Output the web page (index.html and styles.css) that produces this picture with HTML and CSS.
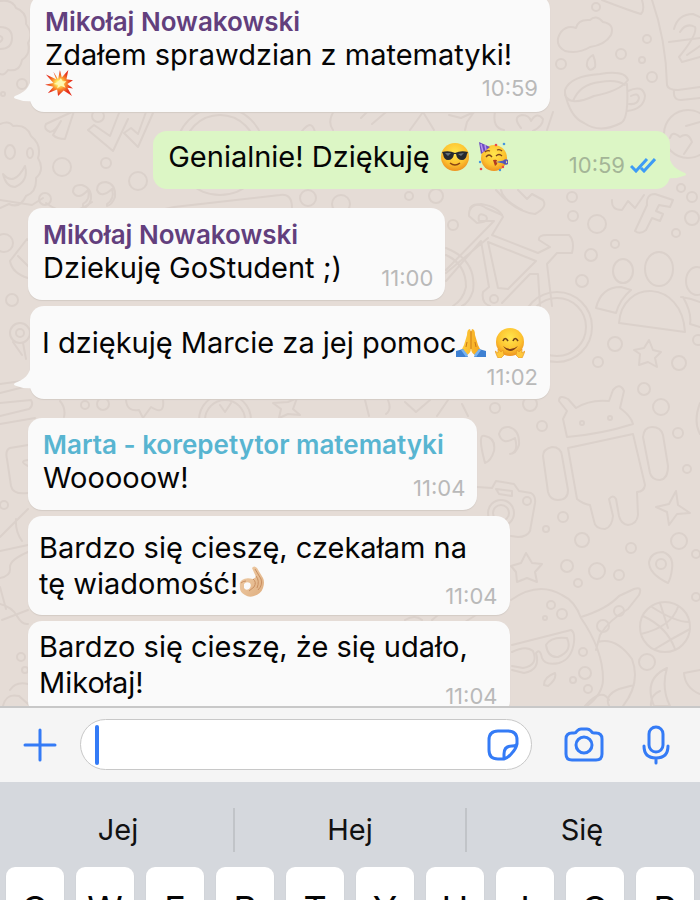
FILE: index.html
```html
<!DOCTYPE html>
<html lang="pl">
<head>
<meta charset="utf-8">
<meta name="viewport" content="width=device-width, initial-scale=1">
<title>Czat</title>
<link rel="stylesheet" href="styles.css">
</head>
<body>
<svg class="defs" aria-hidden="true">
  <defs>
    <radialGradient id="face" cx=".5" cy=".35" r=".65"><stop offset="0" stop-color="#ffe64d"/><stop offset=".65" stop-color="#fdc22f"/><stop offset="1" stop-color="#ee9220"/></radialGradient>
    <radialGradient id="boom" cx=".5" cy=".5" r=".55"><stop offset="0" stop-color="#fff"/><stop offset=".2" stop-color="#ffe65a"/><stop offset=".45" stop-color="#f98d2b"/><stop offset=".8" stop-color="#e62f1c"/></radialGradient>
    <linearGradient id="palm" x1="0" x2="1"><stop offset="0" stop-color="#ffcf3d"/><stop offset="1" stop-color="#f5a51e"/></linearGradient>
    <linearGradient id="skin" x1="0" x2="1" y2="1"><stop offset="0" stop-color="#f0cfaa"/><stop offset="1" stop-color="#dfae7f"/></linearGradient>
    <symbol id="tail" viewBox="0 0 20 26"><path d="M17 0C17 12 9 17 1 20Q-1 21.500 1 22.500Q9 26 20 25V0Z"/></symbol>
  </defs>
</svg>

<main class="chat">
  <svg class="wallpaper" viewBox="0 0 700 706" preserveAspectRatio="xMaxYMin slice" aria-hidden="true">
    <!-- cookies and small shapes on the left -->
    <path d="M0 1Q12-1 16 8Q27 12 26 24Q34 34 28 43Q31 54 22 60Q20 72 8 70Q4 76 0 74M0 27Q12 27 12 38T0 49M0 36Q5 38 0 42"/>
    <path d="M0 124Q9 120 13 126Q27 124 31 136Q42 145 38 158Q45 170 36 178Q37 192 26 196Q20 209 9 204L0 208"/>
    <ellipse cx="10" cy="152" rx="5" ry="7"/><ellipse cx="30" cy="153" rx="3" ry="5"/><path d="M3 174Q14 187 25 166Q29 181 15 187Q6 187 3 174"/>
    <path d="M46 124L74 111L65 139Q57 139 53 135L61 121Q55 132 50 132Q43 129 46 124M88 130L113 151L128 119M88 130L94 125L110 136L119 113M124 133L138 147L153 113M124 133L131 128L138 134L146 112"/>
    <circle cx="98" cy="116" r="6"/><circle cx="62" cy="167" r="9"/><circle cx="106" cy="163" r="5"/><circle cx="138" cy="181" r="9"/><circle cx="45" cy="199" r="6"/><circle cx="22" cy="84" r="5"/><circle cx="12" cy="300" r="6"/><circle cx="3" cy="94" r="2"/>
    <path d="M83 204Q91 199 88 190Q78 201 73 192Q73 184 82 185Q92 188 91 199Q89 207 83 208ZM107 204Q115 199 112 189Q101 199 97 190Q97 182 106 182Q116 184 115 197Q112 205 107 206Z"/>
    <circle cx="220" cy="151" r="44"/><circle cx="220" cy="151" r="36"/><path d="M156 211L174 207L280 195Q292 193 292 208M298 137Q311 116 315 132M334 111Q327 122 333 130"/>
    <circle cx="308" cy="198" r="8"/><circle cx="341" cy="204" r="9"/><circle cx="4" cy="243" r="9"/><path d="M10 261L27 239L40 247M10 261Q12 273 28 278M18 256L30 268"/>
    <circle cx="20" cy="333" r="10"/><circle cx="20" cy="333" r="4"/><path d="M23 343L26 359M13 342L22 355M0 384L29 380M0 393L28 386M0 403L31 400Q34 405 29 409L0 416M0 424L35 418M60 401Q66 408 64 417M0 200L32 205L43 198M46 203Q68 220 92 202"/>
    <circle cx="85" cy="405" r="4"/><circle cx="103" cy="404" r="6"/><circle cx="225" cy="420" r="26"/><circle cx="225" cy="420" r="20"/><path d="M126 400Q127 412 139 410L143 418L151 407Q165 416 163 400M273 403L288 402L297 398L293 409L300 415L288 414L279 418L281 409ZM220 405L225 412L231 403"/>
    <path d="M28 445L10 448Q5 450 7 459L11 486Q13 495 28 493M28 460Q18 461 28 466M0 537L28 509M0 551L28 545M16 519Q15 531 22 541M0 578Q11 576 10 568T28 552M0 604Q12 607 17 616T28 624M0 587L6 609M2 620L28 610"/>
    <circle cx="4" cy="505" r="4"/><circle cx="21" cy="657" r="4"/><circle cx="25" cy="670" r="3"/><path d="M3 706Q6 693 19 696L28 704M10 690Q16 681 28 684"/>
    <!-- cloud, cup and tablet -->
    <path d="M565 51Q553 44 561 32Q567 25 576 28Q578 19 590 20Q596 14 603 22Q615 24 611 35Q605 45 590 47Q579 54 565 51Z"/>
    <path d="M565 90Q570 76 600 74Q625 70 628 80Q620 91 594 96Q570 107 565 95ZM565 93Q570 117 584 123Q600 134 621 123Q629 119 627 84M573 101Q580 84 600 82Q617 79 625 85"/><path d="M628 91Q643 84 645 96Q644 109 627 111M631 96Q638 92 639 98Q638 105 629 104"/>
    <path d="M593 55Q596 62 595 67Q590 73 587 66Q586 59 593 55ZM602 0Q628 10 641 14Q645 10 642 0M652 0Q666 40 667 85Q668 90 678 90L700 87M669 42L700 38M674 91Q673 100 681 100L700 98"/>
    <path d="M674 29Q678 14 693 14L700 17M680 32Q686 22 695 27Q698 34 679 57L682 62L700 57M687 55L700 46"/>
    <circle cx="596" cy="7" r="4"/><circle cx="647" cy="39" r="4"/><circle cx="621" cy="54" r="5"/><circle cx="642" cy="60" r="3"/><circle cx="561" cy="64" r="5"/><circle cx="652" cy="77" r="5"/>
    <circle cx="688" cy="134" r="24"/><path d="M670 138Q672 130 680 137Q688 131 692 142L684 154M686 126L700 122M361 118L367 112M372 124L386 112M410 130L423 112L434 130M449 115L461 118L474 112L467 122L465 130M495 112Q492 128 504 130M521 128Q512 117 522 115Q529 115 531 121Q537 111 543 119Q543 126 533 131M547 130L553 112"/>
    <!-- telephone and keys above the bicycle -->
    <circle cx="409" cy="196" r="4"/><circle cx="436" cy="196" r="7"/><circle cx="572" cy="197" r="5"/><circle cx="681" cy="188" r="4"/><circle cx="692" cy="197" r="5"/>
    <path d="M470 208Q475 201 486 208L502 215M496 190Q515 212 535 214Q548 207 543 200L532 194L527 199L518 190M501 190Q503 200 522 210M612 200Q611 210 622 210L628 201L635 208L644 195M635 231L647 205Q646 194 655 194L673 200L670 207L659 205L656 211L663 214L660 221L652 218L646 230Q640 235 635 231Z"/>
    <!-- bicycle -->
    <circle cx="557" cy="327" r="35"/><circle cx="557" cy="327" r="29"/><path d="M446 248Q477 260 473 291Q469 303 462 306M446 255Q466 264 466 287Q463 300 453 306"/>
    <path d="M477 223L469 216Q468 205 481 204Q499 207 503 217L492 235L538 253L550 247L539 240Q538 235 547 235L569 235Q575 241 572 253L557 253L547 264L552 306M477 223Q490 222 486 216Q477 211 479 221L494 221L446 270M446 281L481 241L489 287L483 292Q481 303 490 306M488 242L536 261L508 289L498 288ZM502 303L530 274L538 274L540 306M488 238L446 273"/>
    <circle cx="494" cy="299" r="4"/><circle cx="453" cy="225" r="5"/><circle cx="573" cy="216" r="5"/><circle cx="597" cy="224" r="9"/><circle cx="615" cy="244" r="4"/><circle cx="591" cy="255" r="6"/><circle cx="582" cy="281" r="6"/><circle cx="676" cy="233" r="4"/><circle cx="692" cy="218" r="7"/>
    <!-- people -->
    <ellipse cx="623" cy="271" rx="10" ry="12"/><ellipse cx="659" cy="269" rx="14" ry="17"/><ellipse cx="697" cy="281" rx="11" ry="14"/>
    <path d="M619 323C622 279 682 279 685 332ZM596 308Q601 287 621 287L631 290Q620 299 616 313ZM681 297Q690 298 700 302M683 297Q692 313 690 324L700 327"/>
    <path d="M649 340L653 350L661 352L655 358L657 367L648 362L639 365L640 354L634 350L644 348Z"/>
    <circle cx="615" cy="344" r="7"/><circle cx="598" cy="362" r="5"/><circle cx="679" cy="363" r="7"/><circle cx="698" cy="340" r="5"/><circle cx="644" cy="389" r="6"/><circle cx="661" cy="407" r="8"/><circle cx="495" cy="408" r="5"/><circle cx="530" cy="404" r="7"/><circle cx="542" cy="426" r="5"/><circle cx="678" cy="433" r="5"/><circle cx="687" cy="469" r="4"/>
    <!-- robot -->
    <path d="M567 437L563 419L567 411L559 401Q559 394 568 399L576 408Q590 399 609 401L613 390Q620 382 624 391L620 408Q631 416 633 424Q602 434 567 437ZM568 448L633 434L645 485Q644 492 637 492L638 515Q637 524 628 525Q621 524 619 516L616 499Q613 494 609 499L613 516Q612 527 605 529Q595 529 594 521L590 505Q583 504 577 499ZM543 456Q543 449 552 447Q561 447 562 456L568 490Q568 500 558 500Q550 500 548 492ZM643 437Q644 427 652 427Q661 427 663 435L668 466Q668 479 660 480Q652 480 650 473Z"/>
    <circle cx="582" cy="423" r="2"/><circle cx="610" cy="418" r="2"/><path d="M676 491L678 505L690 513L677 514L669 525L667 512L656 507L669 504ZM700 403Q693 421 700 434"/>
    <circle cx="563" cy="517" r="5"/><circle cx="546" cy="529" r="3"/><circle cx="582" cy="540" r="7"/><circle cx="631" cy="548" r="5"/><circle cx="679" cy="541" r="8"/><circle cx="696" cy="554" r="4"/><circle cx="567" cy="566" r="6"/><circle cx="597" cy="571" r="8"/><circle cx="619" cy="575" r="5"/><circle cx="578" cy="583" r="4"/><circle cx="696" cy="597" r="4"/>
    <!-- camera, quotes, star, pin -->
    <path d="M483 455Q478 433 485 436Q496 438 494 451Q491 461 485 463ZM510 454Q519 452 515 438Q502 446 499 434Q501 426 509 427Q520 430 519 445Q516 454 510 454ZM477 487L492 488L496 481L514 484L519 491L531 493Q536 496 535 503L530 531Q527 537 518 537L511 536M496 489L512 491L512 496L499 494Z"/>
    <circle cx="501" cy="513" r="13"/><circle cx="501" cy="513" r="8"/><circle cx="527" cy="501" r="4"/>
    <path d="M526 553L532 563L542 564L535 572L537 582L527 578L517 582L516 572L511 566L521 563ZM668 583Q649 574 649 562Q651 552 663 552Q674 556 672 569Q671 578 668 583Z"/><circle cx="661" cy="564" r="5"/>
    <!-- ghost with glasses, ball, boomerang -->
    <path d="M511 600Q538 581 562 595Q575 601 581 618Q603 650 603 679Q603 694 587 706M512 645L571 630Q575 632 574 642Q572 659 559 663Q545 666 542 658Q540 648 536 653Q541 670 524 673L512 670M512 652Q526 645 533 651Q539 665 523 668L512 666M546 645Q551 636 567 638Q573 651 558 657Q548 658 546 645ZM581 617Q607 609 619 596L634 589Q643 586 639 595L628 609Q609 620 600 635L596 650M598 642Q616 637 632 659Q641 683 623 706M609 706Q604 695 619 689L634 685M544 685Q544 677 555 673Q557 679 548 686Z"/>
    <circle cx="551" cy="605" r="4"/><circle cx="562" cy="614" r="5"/><circle cx="545" cy="618" r="2"/><circle cx="603" cy="626" r="6"/><circle cx="619" cy="611" r="5"/><circle cx="583" cy="652" r="4"/><circle cx="585" cy="673" r="6"/><circle cx="573" cy="680" r="3"/><circle cx="588" cy="689" r="4"/><circle cx="647" cy="662" r="8"/>
    <circle cx="665" cy="627" r="25"/><path d="M643 616Q667 627 675 649M641 634Q671 627 678 607M652 607Q675 622 689 622M655 649Q671 639 690 629M660 603L668 628"/>
    <path d="M667 668Q643 679 654 706L670 706Q661 688 667 668M684 673L700 670M684 673Q685 688 700 694M585 706Q602 687 609 700M651 706Q650 695 660 691"/>
    <path d="M365 400L369 416M388 400Q392 410 386 414M405 402L416 412L430 400M437 416L448 400M462 404L468 416M390 600M405 620Q415 614 422 620M432 620L438 615M465 622L476 615"/>
  </svg>

  <ol class="messages">
    <li class="msg in w-wide first">
      <svg class="tail"><use href="#tail"/></svg>
      <div class="body flush"><h2 class="author mikolaj">Mikołaj Nowakowski</h2>
        <p>Zdałem sprawdzian z matematyki!<br><svg class="emoji boom" viewBox="0 0 30 30" role="img" aria-label="💥"><path fill="url(#boom)" d="M14 11L16 1L18 9L25 1L23 11L30 12L24 16L30 21L24 20L29 29L20 23L14 29L13 22L3 26L9 19L0 17L9 15L1 6L12 11L9 3Z"/><path fill="#fff7b0" d="M14 14L17 10L19 13L23 13L20 16L22 20L17 18L13 21L14 17L9 16Z"/></svg></p></div>
      <time>10:59</time>
    </li>
    <li class="msg out">
      <svg class="tail"><use href="#tail"/></svg>
      <div class="body"><p>Genialnie! Dziękuję<svg class="emoji spaced" viewBox="0 0 30 30" role="img" aria-label="😎"><circle cx="15" cy="15" r="14" fill="url(#face)"/><path d="M2 10Q9 8 15 11Q21 8 28 10L27 12Q26 18 22 18Q17 18 16 12H14Q13 18 8 18Q4 18 3 12Z" fill="#252a30"/><path d="M5 11L11 11L8 14ZM18 12L24 11L21 14Z" fill="#667078"/><path d="M10 21Q15 25 20 21" fill="none" stroke="#8a4513" stroke-width="1.500"/></svg>
        <svg class="emoji" viewBox="0 0 30 30" role="img" aria-label="🥳"><circle cx="16" cy="16" r="13" fill="url(#face)"/><path d="M1 0L12 5L3 12Z" fill="#6b4bc0"/><path d="M3 2L5 10M7 3L8 8" stroke="#b894ee" stroke-width="1.500"/><path d="M8 15Q11 11 14 15M18 14Q21 11 24 14M7 10Q9 8 12 9M19 8Q22 7 24 9" fill="none" stroke="#79411c" stroke-width="1.300"/><path d="M15 18Q21 17 18 20Q21 21 17 24" fill="#b13b20"/><path d="M18 20L28 18V22Z" fill="#5060bd"/><circle cx="28" cy="20" r="2" fill="none" stroke="#5752b5" stroke-width="1.500"/><g fill="#eb4a4a"><circle cx="18" cy="3" r="1.300"/><circle cx="3" cy="27" r="1.300"/><circle cx="25" cy="25" r="1.200"/></g><g fill="#4597df"><circle cx="26" cy="2" r="1.300"/><circle cx="2" cy="20" r="1.200"/><circle cx="22" cy="28" r="1.200"/></g></svg></p></div>
      <time>10:59<svg class="ticks" viewBox="0 0 26 16" role="img" aria-label="Przeczytano"><path d="M1 9L6 14L17 2M11 11L14 14L25 2" /></svg></time>
    </li>
    <li class="msg in w-small gap-m">
      <div class="body"><h2 class="author mikolaj">Mikołaj Nowakowski</h2><p>Dziekuję GoStudent ;)</p></div>
      <time>11:00</time>
    </li>
    <li class="msg in w-wide gap-s">
      <svg class="tail"><use href="#tail"/></svg>
      <div class="body roomy"><p>I dziękuję Marcie za jej pomoc<svg class="emoji" viewBox="0 0 30 30" role="img" aria-label="🙏"><path d="M14 1Q11 1 11 7L8 17L5 23L9 28Q15 26 15 20Q15 26 21 28L25 23L22 17L19 7Q19 1 16 1L15 4Z" fill="url(#palm)"/><path d="M15 3V21M11 14L10 19M19 14L20 19" fill="none" stroke="#cc7917"/><path d="M0 23L7 21L12 29H0ZM30 23L23 21L18 29H30Z" fill="#3e80d2"/><path d="M5 22L7 21L12 27L10 29ZM25 22L23 21L18 27L20 29Z" fill="#78b3f1"/></svg>
        <svg class="emoji" viewBox="0 0 30 30" role="img" aria-label="🤗"><circle cx="15" cy="14" r="14" fill="url(#face)"/><path d="M8 13Q10 8 13 13M18 13Q20 8 23 13" fill="none" stroke="#6b3c18" stroke-width="1.600"/><path d="M8 18Q15 24 23 18Q15 28 8 18Z" fill="#7d3d18"/><path d="M2 28L0 23L3 25L3 21L6 24L8 22L9 27L6 30H3ZM28 28L30 23L27 25L27 21L24 24L22 22L21 27L24 30H27Z" fill="#ffc83b" stroke="#e79a22" stroke-width=".7"/></svg></p></div>
      <time>11:02</time>
    </li>
    <li class="msg in w-medium gap-m">
      <div class="body"><h2 class="author marta">Marta - korepetytor matematyki</h2><p>Wooooow!</p></div>
      <time>11:04</time>
    </li>
    <li class="msg in w-large gap-s">
      <div class="body long"><p>Bardzo się cieszę, czekałam na<br>tę wiadomość!<svg class="emoji ok" viewBox="0 0 28 32" role="img" aria-label="👌🏼"><path d="M15 13Q8 11 4 14Q1 16 2 19Q1 26 7 29Q11 32 16 30Q23 28 25 22Q27 16 25 12L19 2Q16-1 14 2L18 11Z" fill="url(#skin)"/><path d="M6 18Q8 15 12 17Q14 20 11 23Q8 25 6 22Z" fill="#fafafa"/><path d="M15 13Q19 16 16 21L11 25M18 10Q22 15 19 22M17 3L23 13Q25 19 20 24M3 17Q5 15 8 15" fill="none" stroke="#c98f62"/></svg></p></div>
      <time>11:04</time>
    </li>
    <li class="msg in w-large gap-s">
      <div class="body short"><p>Bardzo się cieszę, że się udało,<br>Mikołaj!</p></div>
      <time>11:04</time>
    </li>
  </ol>
</main>

<form class="composer">
  <button type="button" class="icon" aria-label="Dodaj"><svg viewBox="0 0 36 36" width="36" height="36"><path d="M18 3V33M3 18H33"/></svg></button>
  <div class="field">
    <span class="caret"></span>
    <input type="text" aria-label="Wiadomość">
    <button type="button" class="icon" aria-label="Naklejki"><svg viewBox="0 0 32 32" width="32" height="32"><path d="M11 2H21Q30 2 30 11V15Q29 20 25 24Q21 29 17 30H11Q2 30 2 21V11Q2 2 11 2ZM17 30V25Q17 17 25 17Q29 17 30 15"/></svg></button>
  </div>
  <button type="button" class="icon camera" aria-label="Aparat"><svg viewBox="0 0 40 36" width="40" height="36"><path d="M8 6H10Q12 6 13 4Q15 2 17 2H23Q25 2 27 4Q28 6 30 6H32Q38 6 38 12V27Q38 33 32 33H8Q2 33 2 27V12Q2 6 8 6Z"/><circle cx="20" cy="18" r="8"/></svg></button>
  <button type="button" class="icon" aria-label="Nagraj"><svg viewBox="0 0 28 40" width="28" height="40"><rect x="7" y="2" width="14" height="25" rx="7"/><path d="M2 21Q2 33 14 33T26 21M14 33V38"/></svg></button>
</form>

<section class="keyboard" aria-label="Klawiatura">
  <div class="suggestions"><button type="button">Jej</button><button type="button">Hej</button><button type="button">Się</button></div>
  <div class="keys"><button type="button">Q</button><button type="button">W</button><button type="button">E</button><button type="button">R</button><button type="button">T</button><button type="button">Y</button><button type="button">U</button><button type="button">I</button><button type="button">O</button><button type="button">P</button></div>
</section>
</body>
</html>
```
FILE: styles.css
```css
* { box-sizing: border-box; }

body {
  margin: 0;
  height: 100vh;
  display: flex;
  flex-direction: column;
  overflow: hidden;
  font-family: Inter, "Liberation Sans", sans-serif;
  color: #050505;
}

.defs { position: absolute; width: 0; height: 0; }

button {
  border: 0;
  padding: 0;
  background: none;
  color: inherit;
  font: inherit;
}

.chat {
  position: relative;
  flex: 1;
  min-height: 0;
  overflow: hidden;
  background: #e5dcd6;
}

.wallpaper {
  position: absolute;
  inset: 0;
  width: 100%;
  height: 100%;
  fill: none;
  stroke: #dbd1cb;
  stroke-width: 2;
  stroke-linejoin: round;
  stroke-linecap: round;
}

.messages {
  position: relative;
  list-style: none;
  margin: 0;
  padding: 0 30px 0 28px;
  display: flex;
  flex-direction: column;
}

.msg {
  position: relative;
  display: grid;
  border-radius: 14px;
  font-size: 29px;
  line-height: 36px;
}

.in { align-self: flex-start; background: #fafafa; box-shadow: 0 1px 1px #d3cbc5; }
.out { align-self: flex-end; width: 80.5%; margin-top: 19px; background: #dcf6c5; }
.first { margin-top: -5px; }
.w-small { width: 65%; }
.w-medium { width: 70%; }
.w-large { width: 75%; }
.w-wide { width: 81%; margin-left: 2px; }
.gap-s { margin-top: 6px; }
.gap-m { margin-top: 19px; }

.body { grid-area: 1 / 1; padding: 8px 15px 14px; white-space: nowrap; }
.body.flush { padding-bottom: 3px; }
.body.roomy { padding: 19px 12px 38px; }
.body.long { padding: 14px 11px 13px; }
.body.short { padding-left: 11px; }

.author { margin: 0; padding-top: 4px; font-size: 26px; line-height: 30px; font-weight: 600; }
.mikolaj { color: #623f7d; }
.marta { color: #58b5d1; }
.msg p { margin: 0; }

time {
  grid-area: 1 / 1;
  place-self: end;
  margin: 0 12px 9px 0;
  font-size: 22px;
  line-height: 25px;
  color: #b9b9b9;
}
.first time, .out time { margin-bottom: 11px; }
.w-large time { margin-bottom: 6px; }
.out time { margin-right: 14px; color: #a4b597; }

.tail { position: absolute; left: -16px; bottom: 10px; width: 20px; height: 26px; fill: #fafafa; }
.out .tail { left: auto; right: -16px; transform: scaleX(-1); fill: #dcf6c5; }

.emoji { width: 30px; height: 30px; margin: -4px 0; vertical-align: -1px; }
.spaced { margin-left: 10px; }
.boom { width: 28px; height: 28px; vertical-align: 8px; }
.ok { width: 28px; height: 32px; vertical-align: 0; }
.ticks { width: 26px; height: 16px; margin-left: 5px; fill: none; stroke: #3d9bf5; stroke-width: 3; }

.composer {
  display: flex;
  align-items: center;
  gap: 22px;
  padding: 11px 30px 12px 22px;
  background: #f5f5f5;
  border-top: 2px solid #c8c8c8;
}

.icon { display: flex; flex: none; }
.icon svg { fill: none; stroke: #347bf6; stroke-width: 3; stroke-linecap: round; stroke-linejoin: round; }
.camera { margin: 0 16px 0 10px; }

.field {
  flex: 1;
  min-width: 0;
  height: 51px;
  display: flex;
  align-items: center;
  padding: 0 12px 0 14px;
  background: #fff;
  border: 1px solid #c8c8c8;
  border-radius: 26px;
}
.field input { flex: 1; min-width: 0; border: 0; outline: 0; background: none; font: inherit; font-size: 29px; }
.caret { width: 4px; height: 40px; border-radius: 2px; background: #347bf6; }

.keyboard { background: #d5d8dd; height: 118px; flex: none; overflow: hidden; padding-top: 26px; }
.suggestions { display: flex; margin-bottom: 15px; padding: 0 3px; }
.suggestions button { flex: 1; height: 44px; font-size: 29px; line-height: 44px; color: #111; }
.suggestions button + button { border-left: 2px solid #c1c4c8; }
.keys { display: flex; gap: 12px; padding: 0 6px; }
.keys button {
  flex: 1;
  height: 84px;
  border-radius: 9px;
  background: #fff;
  box-shadow: 0 1px 1px #b0b3b8;
  font-size: 36px;
}
```
